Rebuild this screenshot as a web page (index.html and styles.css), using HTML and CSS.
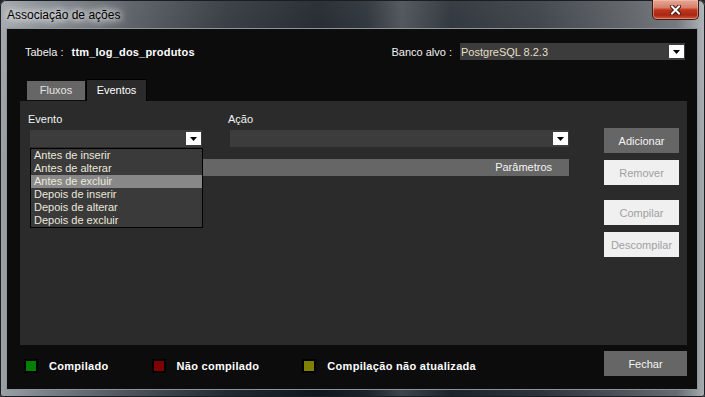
FILE: index.html
```html
<!DOCTYPE html>
<html lang="pt-BR">
<head>
    <meta charset="UTF-8">
    <title>Associação de ações</title>
    <meta name="viewport" content="width=device-width, initial-scale=1.0">
    <link rel="stylesheet" href="styles.css">
</head>
<body>

    <div class="window">

        <!-- Title bar -->
        <div class="titlebar">
            <span class="title">Associação de ações</span>
            <button class="close-btn" title="Fechar">
                <svg width="11" height="10" viewBox="0 0 11 10">
                    <path d="M2 1.5 L9 8.5 M9 1.5 L2 8.5" stroke="#3a1810" stroke-width="4" stroke-linecap="square"/>
                    <path d="M2 1.5 L9 8.5 M9 1.5 L2 8.5" stroke="#fff" stroke-width="2" stroke-linecap="square"/>
                </svg>
            </button>
        </div>

        <div class="client">

            <!-- Table / target database -->
            <div class="top-row">
                <span class="label">Tabela :</span>
                <span class="table-name">ttm_log_dos_produtos</span>
                <span class="label target-label">Banco alvo :</span>
                <div class="combo target-combo">
                    <span class="combo-text">PostgreSQL 8.2.3</span>
                    <span class="combo-arrow"><svg width="7" height="4" viewBox="0 0 7 4"><path d="M0 0 H7 L3.5 4 Z" fill="#000"/></svg></span>
                </div>
            </div>

            <!-- Tabs -->
            <div class="tabs">
                <div class="tab">Fluxos</div>
                <div class="tab active">Eventos</div>
            </div>

            <div class="panel">
                <div class="panel-main">
                    <div class="fields">
                        <div class="field event-field">
                            <label>Evento</label>
                            <div class="combo">
                                <span class="combo-text"></span>
                                <span class="combo-arrow"><svg width="7" height="4" viewBox="0 0 7 4"><path d="M0 0 H7 L3.5 4 Z" fill="#000"/></svg></span>
                            </div>
                            <ul class="dropdown">
                                <li>Antes de inserir</li>
                                <li>Antes de alterar</li>
                                <li class="selected">Antes de excluir</li>
                                <li>Depois de inserir</li>
                                <li>Depois de alterar</li>
                                <li>Depois de excluir</li>
                            </ul>
                        </div>
                        <div class="field action-field">
                            <label>Ação</label>
                            <div class="combo">
                                <span class="combo-text"></span>
                                <span class="combo-arrow"><svg width="7" height="4" viewBox="0 0 7 4"><path d="M0 0 H7 L3.5 4 Z" fill="#000"/></svg></span>
                            </div>
                        </div>
                    </div>
                    <div class="grid-header">Parâmetros</div>
                </div>

                <div class="panel-buttons">
                    <button class="btn">Adicionar</button>
                    <button class="btn disabled">Remover</button>
                    <button class="btn disabled spaced">Compilar</button>
                    <button class="btn disabled">Descompilar</button>
                </div>
            </div>

            <!-- Legend + close -->
            <div class="footer">
                <div class="legend">
                    <div class="legend-item"><span class="swatch green"></span>Compilado</div>
                    <div class="legend-item"><span class="swatch red"></span>Não compilado</div>
                    <div class="legend-item"><span class="swatch olive"></span>Compilação não atualizada</div>
                </div>
                <button class="btn close">Fechar</button>
            </div>

        </div>
    </div>

</body>
</html>
```

FILE: styles.css
```css
body {
    margin: 0;
    width: 705px;
    height: 397px;
    overflow: hidden;
    font-family: "Liberation Sans", Arial, sans-serif;
    font-size: 11px;
    background: #20252b;
}
.window {
    width: 705px;
    height: 397px;
    display: flex;
    flex-direction: column;
    border-radius: 6px 6px 3px 3px;
    background:
        linear-gradient(180deg, rgba(255,255,255,0.12) 0%, rgba(255,255,255,0) 40%),
        linear-gradient(90deg, #9ca1a6 0%, #7d838a 6%, #4e545a 18%, #242a31 32%, #10161d 45%, #1b2229 52%, #3f454b 57%, #1c232a 64%, #2c3238 76%, #4d5258 88%, #666b70 96%, #a9aeb3 100%);
    box-shadow: inset 0 0 0 1px #1a1e23;
}
.titlebar {
    height: 28px;
    display: flex;
    align-items: flex-start;
}
.title {
    padding: 7px 0 0 7px;
    font-size: 12px;
    line-height: 16px;
    color: #000;
    text-shadow: 0 0 6px #fff, 0 0 10px #fff, 0 0 14px rgba(255,255,255,0.8);
}
.close-btn {
    margin-left: auto;
    margin-right: 6px;
    width: 47px;
    height: 20px;
    padding: 0;
    display: flex;
    align-items: center;
    justify-content: center;
    border: 1px solid #3b1d17;
    border-top: none;
    border-radius: 0 0 5px 5px;
    background: linear-gradient(180deg, #e4aa9a 0%, #d77d66 40%, #bd361c 52%, #ab2714 80%, #cf5a3a 100%);
    box-shadow: inset 0 0 0 1px rgba(255,200,180,0.45);
}
.client {
    flex: 1;
    margin: 0 7px 7px 6px;
    border: 1px solid #8e959c;
    background: #0c0c0c;
    display: flex;
    flex-direction: column;
    color: #fff;
}

/* top row */
.top-row {
    margin-top: 14px;
    height: 17px;
    padding: 0 12px 0 18px;
    display: flex;
    align-items: center;
}
.label {
    color: #f2f2f2;
}
.table-name {
    margin-left: 8px;
    font-weight: bold;
    letter-spacing: 0.2px;
}
.target-label {
    margin-left: auto;
}
.target-combo {
    margin-left: 8px;
    width: 225px;
}

/* combos */
.combo {
    height: 17px;
    box-sizing: border-box;
    background: #3c3c3c;
    display: flex;
    align-items: center;
    padding: 0 1px 0 1px;
}
.combo-text {
    flex: 1;
    color: #e8dec6;
}
.combo-arrow {
    width: 15px;
    height: 13px;
    background: #fff;
    display: flex;
    align-items: center;
    justify-content: center;
}

/* tabs */
.tabs {
    margin-top: 19px;
    height: 22px;
    padding-left: 20px;
    display: flex;
    align-items: flex-end;
}
.tab {
    width: 58px;
    height: 19px;
    margin-bottom: 1px;
    background: #666;
    color: #e4e4e4;
    line-height: 19px;
    text-align: center;
}
.tab.active {
    width: 59px;
    height: 21px;
    margin: 0 0 0 1px;
    background: #2b2b2b;
    border: 1px solid #000;
    border-bottom: none;
    color: #fff;
    line-height: 21px;
}

/* panel */
.panel {
    margin-left: 13px;
    width: 667px;
    height: 244px;
    box-sizing: border-box;
    background: #2b2b2b;
    padding: 12px 8px 0 10px;
    display: flex;
}
.panel-main {
    width: 539px;
}
.fields {
    display: flex;
    gap: 28px;
}
.field {
    position: relative;
    display: flex;
    flex-direction: column;
}
.field label {
    margin-left: -2px;
    line-height: 13px;
    margin-bottom: 4px;
    color: #f2f2f2;
}
.event-field {
    width: 172px;
}
.action-field {
    width: 339px;
}
.dropdown {
    position: absolute;
    top: 35px;
    left: 0;
    width: 173px;
    margin: 0;
    padding: 0;
    list-style: none;
    box-sizing: border-box;
    border: 1px solid #000;
    background: #3a3a3a;
    z-index: 2;
}
.dropdown li {
    height: 13px;
    line-height: 13px;
    padding-left: 3px;
    color: #ece8dc;
}
.dropdown li.selected {
    background: #888;
}
.grid-header {
    margin-top: 12px;
    height: 17px;
    line-height: 17px;
    background: #666;
    text-align: right;
    padding-right: 17px;
    color: #f4f4f4;
}

/* buttons */
.panel-buttons {
    margin-left: auto;
    padding-top: 15px;
    display: flex;
    flex-direction: column;
    gap: 7px;
}
.btn {
    width: 75px;
    height: 25px;
    padding: 0;
    border: none;
    background: #666;
    color: #f4f4f4;
    font-family: "Liberation Sans", Arial, sans-serif;
    font-size: 11px;
}
.btn.disabled {
    background: #f0f0f0;
    color: #a0a0a0;
}
.btn.spaced {
    margin-top: 8px;
}

/* footer */
.footer {
    flex: 1;
    display: flex;
    align-items: flex-start;
    padding: 6px 10px 0 17px;
}
.legend {
    margin-top: 8px;
    display: flex;
    gap: 43px;
}
.legend-item {
    display: flex;
    align-items: center;
    font-weight: bold;
    letter-spacing: 0.3px;
    line-height: 14px;
}
.swatch {
    width: 10px;
    height: 10px;
    border: 2px solid #000;
    margin-right: 11px;
}
.swatch.green { background: #008000; }
.swatch.red { background: #800000; }
.swatch.olive { background: #808000; }
.btn.close {
    margin-left: auto;
    width: 83px;
}
```
